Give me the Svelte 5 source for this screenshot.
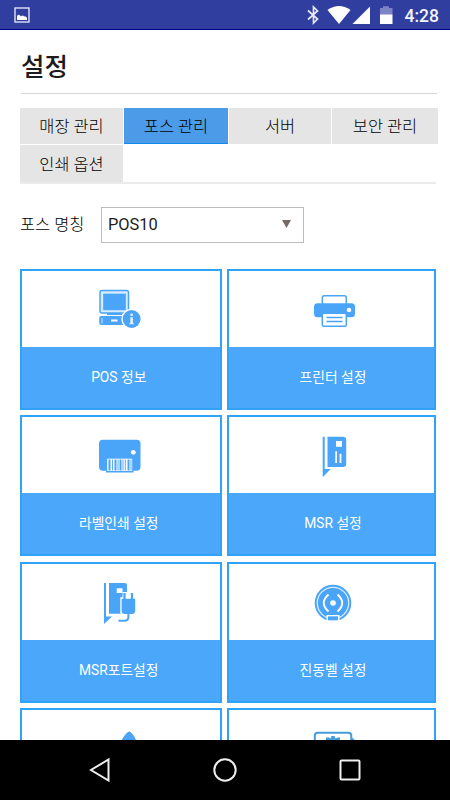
<script lang="ts">
  type Tile = { icon: string; label: string };

  const tabs = ['매장 관리', '포스 관리', '서버', '보안 관리', '인쇄 옵션'];
  let activeTab = '포스 관리';

  const posName = 'POS10';

  const tiles: Tile[] = [
    { icon: 'pos', label: 'POS 정보' },
    { icon: 'printer', label: '프린터 설정' },
    { icon: 'label', label: '라벨인쇄 설정' },
    { icon: 'msr', label: 'MSR 설정' },
    { icon: 'port', label: 'MSR포트설정' },
    { icon: 'bell', label: '진동벨 설정' },
    { icon: 'drop', label: '' },
    { icon: 'device', label: '' },
  ];
</script>

<div class="screen">
  <!-- Android status bar -->
  <header class="status-bar">
    <svg class="picture" width="16" height="16" viewBox="0 0 16 16">
      <rect x="1" y="1" width="14" height="14" fill="none" stroke="#dfe2f4" stroke-width="1.4" />
      <path d="M3 13V9q1.500-2 3-.6l1 1q1.500-1.600 3 0 2-.4 3 1.600v2z" fill="#fff" />
    </svg>
    <svg class="indicators" width="88" height="20" viewBox="0 0 88 20">
      <path d="M1.500 5.500 11 14l-4 4V2l4 4-9.500 8.500" transform="translate(0.500 0)" fill="none" stroke="#e6e8f6" stroke-width="1.700" />
      <path d="M21.500 4.500Q33-3.500 44.500 4.500L33 18.500z" transform="translate(0 .4)" fill="#fff" />
      <path d="M46.500 19 64 1.500V19z" fill="#fff" />
      <path d="M74 3h3V1.200h6V3h3.500v7H74z" fill="#7c84c4" />
      <path d="M74 9.500h12.500V19H74z" fill="#fff" />
    </svg>
    <span class="clock">4:28</span>
  </header>

  <main class="content">
    <h1>설정</h1>

    <nav class="tabs">
      {#each tabs as tab}
        <button class="tab" class:active={tab === activeTab} on:click={() => (activeTab = tab)}>{tab}</button>
      {/each}
    </nav>

    <div class="field">
      <span class="field-label">포스 명칭</span>
      <div class="select">
        <span>{posName}</span>
        <svg width="9" height="8" viewBox="0 0 9 8"><path d="M0 0h9L4.500 8z" fill="#746a66" /></svg>
      </div>
    </div>

    <section class="tiles">
      {#each tiles as tile}
        <div class="tile">
          <div class="tile-icon">
            <svg width="48" height="48" viewBox="0 0 48 48" fill="#4aa5f9">
              {#if tile.icon === 'pos'}
                <rect x="4" y="4.500" width="28.500" height="22.500" rx="2" fill="#d5ebfe" stroke="#4aa5f9" stroke-width="1.500" />
                <rect x="7.200" y="7.700" width="22.600" height="16.500" />
                <path d="M11 27h15v2H11z" />
                <rect x="3.200" y="30" width="26" height="9" rx="2" />
                <path d="M6 32v5.500" stroke="#cfe8fe" />
                <rect x="15" y="33.500" width="6.500" height="2" fill="#fff" />
                <circle cx="35.600" cy="33" r="10.300" fill="#fff" />
                <circle cx="35.600" cy="33" r="9" />
                <circle cx="35.600" cy="28.800" r="1.400" fill="#e3f2ff" />
                <path d="M34.300 31.300h2.600v5.900h.9v1.100h-4.400v-1.100h.9z" fill="#e3f2ff" />
              {:else if tile.icon === 'printer'}
                <rect x="12.300" y="9.800" width="24" height="14" rx="2" fill="#fff" stroke="#4aa5f9" stroke-width="1.500" />
                <rect x="4" y="17.300" width="41" height="14" rx="3.500" />
                <circle cx="39" cy="24" r="2.300" fill="#fff" />
                <rect x="12.300" y="27.300" width="24" height="13" rx="1.500" fill="#fff" stroke="#4aa5f9" stroke-width="1.500" />
                <path d="M16.500 31.500h16M16.500 35.500h16" stroke="#4aa5f9" stroke-width="1.300" />
              {:else if tile.icon === 'label'}
                <rect x="3" y="7.700" width="41.500" height="31" rx="4" />
                <circle cx="37.300" cy="20.300" r="2.400" fill="#fff" />
                <rect x="10" y="25.500" width="27.500" height="15" />
                <rect x="11.200" y="26.700" width="25" height="12.300" fill="#fff" />
                <path d="M13.500 27.500v11M19.500 27.500v11M24.500 27.500v11M32.500 27.500v11" stroke="#4aa5f9" stroke-width="2" />
                <path d="M16.500 27.500v11M22 27.500v11M27 27.500v11M29.300 27.500v11M35 27.500v11" stroke="#4aa5f9" stroke-width=".9" />
              {:else if tile.icon === 'msr'}
                <path d="M12.700 4.700h2V37h6l-8 8.300z" />
                <path d="M17.500 4.700H33q3.200 0 3.200 3.200v23.800q0 3.200-3.200 3.200H17.500z" />
                <path d="M26 9h6v5.700h-6zM25.300 19.300H27V31h-1.700zM29.600 21.700h1.800V31h-1.800z" fill="#fff" />
              {:else if tile.icon === 'port'}
                <path d="M8 4h2v33.400h6L8 45z" />
                <path d="M13 4h15.500q2.500 0 2.500 2.500v28.200H13z" />
                <path d="M20.700 9.300h5.800V14h-5.800z" fill="#fff" />
                <path d="M24.300 34.700V18.200h2.200V13h12v7h2.500v15z" fill="#fff" />
                <path d="M25.600 19.700h13.600v11.800q0 3.500-3.500 3.500h-6.600q-3.500 0-3.500-3.500z" />
                <path d="M28.500 14v7M36 14v7" stroke="#4aa5f9" stroke-width="2.300" />
                <path d="M32.400 34v4q0 3.700-4 3.700H22.500" fill="none" stroke="#4aa5f9" stroke-width="2" />
              {:else if tile.icon === 'bell'}
                <circle cx="23" cy="24" r="18.300" />
                <circle cx="23" cy="24" r="15.700" fill="none" stroke="#d8edff" stroke-width="1.300" />
                <circle cx="23" cy="24" r="2.800" fill="#fff" />
                <path d="M18.500 15.500Q9 24 18.500 32.500M27.500 15.500Q37 24 27.500 32.500" fill="none" stroke="#fff" stroke-width="1.900" />
                <path d="M16.500 36h13v6.500h-13z" fill="#fff" />
                <path d="M18 37.300h10v4H18z" />
              {:else if tile.icon === 'drop'}
                <path d="M25 16Q29 9 32 7q1.500-1 3 .5Q39 11 41 18v12H25z" />
              {:else}
                <rect x="4.800" y="7.800" width="36.500" height="28" rx="3" fill="none" stroke="#459bdc" stroke-width="2" />
                <path d="M41 12l4 3v8h-4z" fill="#459bdc" />
                <path d="M16 12.500h3l1.500 1 1-2.500h3l1 2.500 2-1h2.500V22H16z" fill="#459bdc" />
              {/if}
            </svg>
          </div>
          <div class="tile-label">{tile.label}</div>
        </div>
      {/each}
    </section>
  </main>

  <!-- Android navigation bar -->
  <footer class="nav-bar">
    <svg width="24" height="26" viewBox="0 0 24 26"><path d="M20.500 2.500v21L3 13z" /></svg>
    <svg width="26" height="26" viewBox="0 0 26 26"><circle cx="13" cy="13" r="10.700" /></svg>
    <svg width="24" height="26" viewBox="0 0 24 26"><rect x="2.500" y="3.500" width="19" height="19" rx="1" /></svg>
  </footer>
</div>

<style>
  :global(body) {
    margin: 0;
  }

  .screen {
    display: flex;
    flex-direction: column;
    width: 450px;
    height: 800px;
    overflow: hidden;
    background: #fff;
    color: #1c1c1c;
    font-family: Roboto, 'Noto Sans CJK KR', sans-serif;
  }

  .status-bar {
    display: flex;
    flex: none;
    align-items: center;
    box-sizing: border-box;
    height: 30px;
    padding: 0 11px 0 14px;
    border-bottom: 1px solid #00008a;
    background: #303f9f;
  }

  .picture {
    margin-right: auto;
  }

  .indicators {
    margin-top: 1px;
    margin-right: 11px;
  }

  .clock {
    margin-top: 2px;
    color: #f3f4fb;
    font-size: 17.5px;
    font-weight: 500;
    line-height: 30px;
  }

  .content {
    flex: 1;
    min-height: 0;
    padding: 0 13px 0 20px;
    overflow: hidden;
  }

  h1 {
    box-sizing: border-box;
    height: 64px;
    margin: 0 0 14px 1px;
    padding-top: 18px;
    border-bottom: 1px solid #d6d6d6;
    font-size: 25.5px;
    font-weight: 500;
    line-height: 38px;
  }

  .tabs {
    display: grid;
    grid-template-columns: 103px 104px 102px 106px;
    grid-template-rows: 36px 37px;
    gap: 1px;
    width: 416px;
    border-bottom: 2px solid #ebebeb;
  }

  .tab {
    padding: 0 0 2px;
    border: 0;
    background: #e5e5e5;
    color: #000;
    font: inherit;
    font-size: 16.4px;
    font-weight: 300;
  }

  .tab.active {
    padding-bottom: 1px;
    border-bottom: 1px solid #1188ee;
    background: #4c9be8;
  }

  .field {
    display: flex;
    align-items: center;
    margin-top: 23px;
    font-size: 16.4px;
  }

  .field-label {
    width: 81px;
    padding-bottom: 4px;
    color: #000;
    font-weight: 300;
  }

  .select {
    display: flex;
    align-items: center;
    justify-content: space-between;
    box-sizing: border-box;
    width: 203px;
    height: 36px;
    padding: 0 12px 2px 6px;
    border: 1px solid #bcbcbc;
  }

  .tiles {
    display: grid;
    grid-template-columns: 201.5px 209.5px;
    gap: 5.3px;
    margin-top: 26px;
  }

  .tile {
    box-sizing: border-box;
    height: 141px;
    border: 2px solid #30a2f8;
    background: #4aa7fa;
    color: #fff;
  }

  .tile-icon {
    display: flex;
    justify-content: center;
    box-sizing: border-box;
    height: 76px;
    padding-top: 15px;
    background: #fff;
  }

  .tile:nth-child(odd) .tile-icon {
    padding-right: 2px;
  }

  .tile:nth-child(even) .tile-icon {
    padding-left: 4px;
  }

  .tile-label {
    font-size: 13.8px;
    line-height: 60px;
    text-align: center;
  }

  .tile:nth-child(odd) .tile-label {
    padding-right: 4px;
  }

  .tile:nth-child(even) .tile-label {
    padding-left: 3px;
  }

  .nav-bar {
    display: flex;
    flex: none;
    align-items: center;
    justify-content: space-between;
    box-sizing: border-box;
    height: 60px;
    padding: 0 88px;
    background: #000;
  }

  .nav-bar svg {
    fill: none;
    stroke: #eee;
    stroke-width: 2;
  }
</style>
